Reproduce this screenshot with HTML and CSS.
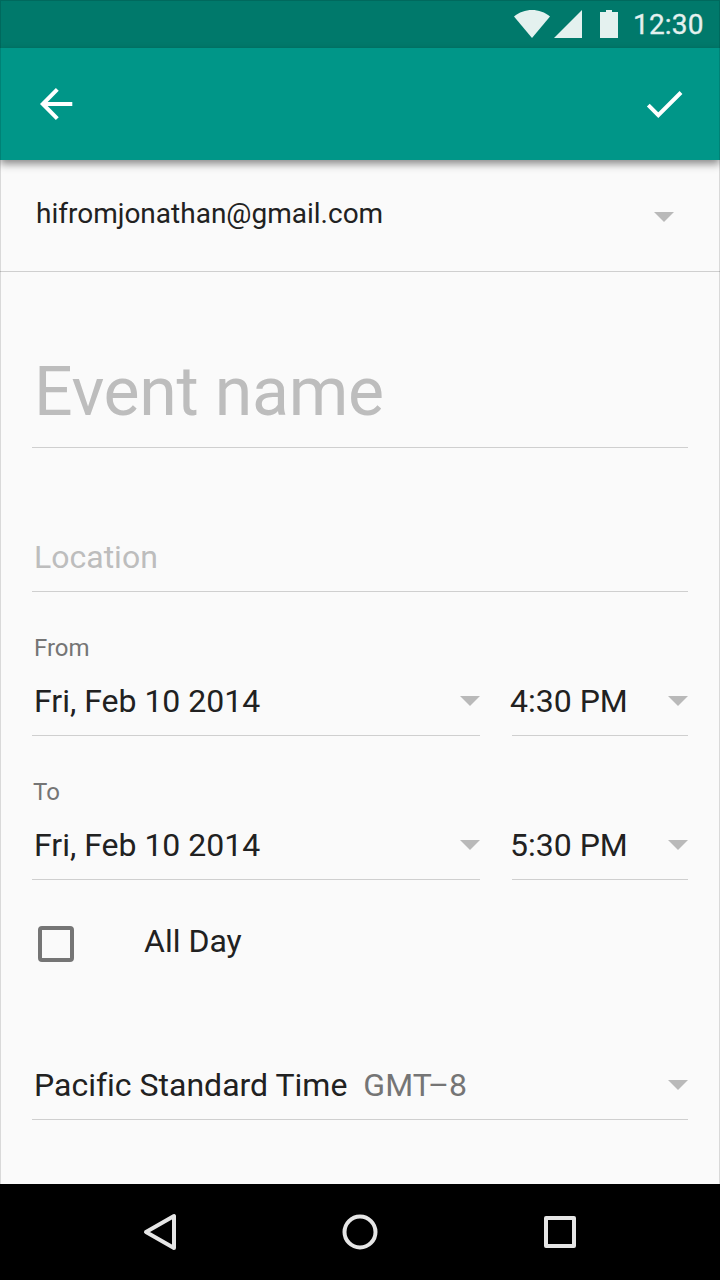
FILE: index.html
```html
<!DOCTYPE html>
<html lang="en">
<head>
<meta charset="utf-8">
<title>New event</title>
<link rel="stylesheet" href="styles.css">
</head>
<body>
<div class="screen">
  <div class="status-bar">
    <svg class="status-icons" width="106" height="48" viewBox="0 0 106 48">
      <path d="M0 16.5C10 7.8 26 7.8 36 16.5L18 38Z"/>
      <path d="M68 10V38H40Z"/>
      <path d="M86 12H92V10H98V12H104V38H86Z"/>
    </svg>
    <span class="clock">12:30</span>
  </div>
  <header class="app-bar">
    <svg class="icon" width="48" height="48" viewBox="0 0 48 48"><path d="M40.3 24H11M25.3 9.3L10.8 24L25.3 38.7"/></svg>
    <svg class="icon" width="48" height="48" viewBox="0 0 48 48"><path d="M8.3 25.2L18.3 35.2L41 12.5"/></svg>
  </header>
  <main class="form">
    <div class="account">
      <span class="email">hifromjonathan@gmail.com</span>
      <i class="caret"></i>
    </div>
    <div class="field field-title"><span class="title">Event name</span></div>
    <div class="field"><span class="text hint location">Location</span></div>
    <section class="when">
      <div class="field field-date">
        <span class="label">From</span>
        <div class="line"><span class="text">Fri, Feb 10 2014</span><i class="caret"></i></div>
      </div>
      <div class="field field-time">
        <div class="line"><span class="text time">4:30 PM</span><i class="caret"></i></div>
      </div>
    </section>
    <section class="when">
      <div class="field field-date">
        <span class="label label-to">To</span>
        <div class="line"><span class="text">Fri, Feb 10 2014</span><i class="caret"></i></div>
      </div>
      <div class="field field-time">
        <div class="line"><span class="text time">5:30 PM</span><i class="caret"></i></div>
      </div>
    </section>
    <div class="all-day"><span class="checkbox"></span><span class="text">All Day</span></div>
    <div class="field field-zone">
      <div class="line"><span class="text">Pacific Standard Time</span><span class="text offset">GMT–8</span><i class="caret"></i></div>
    </div>
  </main>
  <nav class="nav-bar">
    <svg width="720" height="96" viewBox="0 0 720 96">
      <path d="M146 48L174 32V64Z"/>
      <circle cx="360" cy="48" r="15.5"/>
      <rect x="546" y="34" width="28" height="28"/>
    </svg>
  </nav>
</div>
</body>
</html>
```
FILE: styles.css
```css
* { box-sizing: border-box; }
body { margin: 0; font-family: Roboto, sans-serif; font-variant-ligatures: none; color: #212121; }
.screen {
  position: relative;
  display: flex;
  flex-direction: column;
  width: 720px;
  height: 1280px;
  background: #fafafa;
}
/* hairline frame around the device content */
.screen::after {
  content: "";
  position: absolute;
  inset: 0;
  border: 1px solid rgba(0, 0, 0, 0.13);
  pointer-events: none;
}
.status-bar {
  display: flex;
  justify-content: flex-end;
  height: 48px;
  padding-right: 16px;
  background: #00796b;
  color: #e4f1ef;
}
.status-icons { fill: #e4f1ef; margin-right: 13px; }
.clock { width: 71px; padding-top: 1px; font-size: 28px; line-height: 48px; letter-spacing: 0.2px; -webkit-text-stroke: 0.3px #e4f1ef; }
.app-bar {
  display: flex;
  flex: none;
  align-items: center;
  justify-content: space-between;
  height: 112px;
  padding: 0 32px;
  background: #009688;
  box-shadow: 0 4px 8px rgba(0, 0, 0, 0.45);
}
.icon { fill: none; stroke: #fff; stroke-width: 4; }
.form { display: flex; flex: 1; flex-direction: column; }
.account {
  display: flex;
  justify-content: space-between;
  height: 112px;
  padding: 34px 46px 0 36px;
  border-bottom: 1px solid #cfcfcf;
}
.email { font-size: 28px; line-height: 40px; }
.account .caret { margin-top: 18px; }
.caret {
  width: 20px;
  height: 10px;
  background: #b9b9b9;
  clip-path: polygon(0 0, 100% 0, 50% 100%);
}
.field {
  display: flex;
  flex-direction: column;
  justify-content: flex-end;
  height: 144px;
  margin: 0 32px;
  padding-bottom: 14px;
  border-bottom: 1px solid #cfcfcf;
}
.field-title { height: 176px; padding-bottom: 15px; }
.title { padding-left: 2px; font-size: 68px; line-height: 80px; letter-spacing: -0.36px; color: #bdbdbd; }
.text { padding-left: 2px; font-size: 32px; line-height: 40px; white-space: pre; }
.hint { color: #bdbdbd; }
.label { margin-bottom: 17px; padding-left: 2px; font-size: 24px; line-height: 32px; color: #757575; }
.label-to { padding-left: 1px; }
.when { display: flex; gap: 32px; margin: 0 32px; }
.when .field { margin: 0; }
.field-date { width: 448px; }
.field-time { width: 176px; }
.line { display: flex; align-items: center; }
.line .caret { margin-left: auto; }
.time { margin-left: -4px; }
.all-day { display: flex; height: 96px; padding: 41px 38px 0; }
.all-day .text { padding-left: 0; }
.checkbox {
  width: 36px;
  height: 36px;
  margin: 5px 70px 0 0;
  border: 4px solid #757575;
  border-radius: 4px;
}
.offset { margin-left: 14px; color: #757575; }
.nav-bar { height: 96px; background: #000; }
.nav-bar svg { display: block; fill: none; stroke: #e6e6e6; stroke-width: 4; stroke-linejoin: round; }
```
